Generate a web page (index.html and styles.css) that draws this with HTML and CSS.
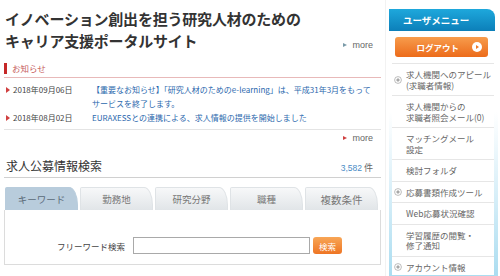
FILE: index.html
```html
<!DOCTYPE html>
<html lang="ja">
<head>
<meta charset="utf-8">
<title>研究人材のためのキャリア支援ポータルサイト</title>
<link rel="stylesheet" href="styles.css">
</head>
<body>
<div class="page">
  <div class="main">
    <div class="hero">
      <h1 class="site-title">イノベーション創出を担う研究人材のための<br>キャリア支援ポータルサイト</h1>
      <a class="more">more</a>
    </div>

    <section class="notice">
      <h2 class="notice-title"><span>お知らせ</span></h2>
      <ul class="news">
        <li><span class="date">2018年09月06日</span><a class="news-link">【重要なお知らせ】「研究人材のためのe-learning」は、平成31年3月をもって<br>サービスを終了します。</a></li>
        <li><span class="date">2018年08月02日</span><a class="news-link">EURAXESSとの連携による、求人情報の提供を開始しました</a></li>
      </ul>
      <div class="more-row"><a class="more more-red">more</a></div>
    </section>

    <section class="search">
      <div class="search-head">
        <h2 class="search-title">求人公募情報検索</h2>
        <span class="count"><span class="num">3,582</span> 件</span>
      </div>
      <div class="tabs">
        <span class="tab active">キーワード</span>
        <span class="tab">勤務地</span>
        <span class="tab">研究分野</span>
        <span class="tab">職種</span>
        <span class="tab tab-wide">複数条件</span>
      </div>
      <div class="panel">
        <label class="fw-label">フリーワード検索</label>
        <input class="fw-input" type="text">
        <button class="fw-btn">検索</button>
      </div>
    </section>
  </div>

  <aside class="side">
    <div class="side-box">
      <div class="side-head">ユーザメニュー</div>
      <a class="logout">ログアウト<span class="logout-ico"><svg width="10" height="10" viewBox="0 0 10 10"><circle cx="5" cy="5" r="5" fill="#fff"/><path d="M4 3 L7 5 L4 7 Z" fill="#f07a28"/></svg></span></a>
      <ul class="menu">
        <li class="has-icon"><span class="plus"><svg width="8" height="8" viewBox="0 0 8 8"><circle cx="4" cy="4" r="3.4" fill="#fff" stroke="#a0a0a0" stroke-width="0.7"/><path d="M2.2 4H5.8M4 2.2V5.8" stroke="#777" stroke-width="0.8"/></svg></span><span>求人機関へのアピール<br>(求職者情報)</span></li>
        <li><span>求人機関からの<br>求職者照会メール(0)</span></li>
        <li><span>マッチングメール<br>設定</span></li>
        <li><span>検討フォルダ</span></li>
        <li class="has-icon"><span class="plus"><svg width="8" height="8" viewBox="0 0 8 8"><circle cx="4" cy="4" r="3.4" fill="#fff" stroke="#a0a0a0" stroke-width="0.7"/><path d="M2.2 4H5.8M4 2.2V5.8" stroke="#777" stroke-width="0.8"/></svg></span><span>応募書類作成ツール</span></li>
        <li><span>Web応募状況確認</span></li>
        <li><span>学習履歴の閲覧・<br>修了通知</span></li>
        <li class="has-icon last"><span class="plus"><svg width="8" height="8" viewBox="0 0 8 8"><circle cx="4" cy="4" r="3.4" fill="#fff" stroke="#a0a0a0" stroke-width="0.7"/><path d="M2.2 4H5.8M4 2.2V5.8" stroke="#777" stroke-width="0.8"/></svg></span><span>アカウント情報</span></li>
      </ul>
    </div>
  </aside>
</div>
</body>
</html>
```

FILE: styles.css
```css
* { box-sizing: border-box; }
body {
  margin: 0;
  background: #fff;
  color: #555;
  font-family: "Noto Sans CJK JP", "Noto Sans", sans-serif;
}
ul { margin: 0; padding: 0; list-style: none; }
h1, h2 { margin: 0; }

.page {
  display: flex;
  width: 500px;
  height: 276px;
  overflow: hidden;
}

/* ---------- main column ---------- */
.main {
  width: 385px;
  flex: none;
  padding: 0 4px;
}

.hero {
  display: flex;
  justify-content: space-between;
  align-items: flex-end;
  padding: 8px 8px 0 1px;
}
.site-title {
  font-size: 15px;
  line-height: 22px;
  font-weight: 700;
  color: #333;
  letter-spacing: -0.2px;
}

.more {
  display: inline-flex;
  align-items: center;
  font-family: "Liberation Sans", sans-serif;
  font-size: 9px;
  line-height: 14px;
  color: #666;
}
.more::before {
  content: "";
  width: 0;
  height: 0;
  border-left: 4px solid #7a9aa8;
  border-top: 2.5px solid transparent;
  border-bottom: 2.5px solid transparent;
  margin-right: 5px;
}
.more-red::before { border-left-color: #d04040; }

.notice { margin-top: 10px; }
.notice-title {
  font-size: 8.5px;
  font-weight: 400;
  color: #c65a5a;
  border-bottom: 1px solid #e8b9b9;
  padding-bottom: 3px;
}
.notice-title span {
  display: inline-block;
  border-left: 3px solid #c62828;
  padding-left: 5px;
  line-height: 11px;
}

.news {
  margin-top: 5px;
  padding-bottom: 4px;
  border-bottom: 1px solid #e4e4e4;
}
.news li {
  display: flex;
  font-size: 8px;
  line-height: 14px;
  padding-left: 2px;
}
.news li::before {
  content: "";
  flex: none;
  width: 0;
  height: 0;
  margin-top: 4px;
  border-left: 4px solid #d04040;
  border-top: 3px solid transparent;
  border-bottom: 3px solid transparent;
  margin-right: 3px;
}
.date {
  width: 79px;
  flex: none;
  color: #444;
}
.news-link { color: #2b68ad; }

.more-row {
  display: flex;
  justify-content: flex-end;
  padding: 1px 8px 0 0;
  line-height: 12px;
}

.search { margin-top: 12px; }
.search-head {
  display: flex;
  justify-content: space-between;
  align-items: flex-end;
  border-bottom: 1px solid #d0d0d0;
  padding: 0 8px 3px 2px;
}
.search-title {
  font-size: 12px;
  line-height: 17px;
  font-weight: 400;
  color: #333;
}
.count {
  font-size: 9px;
  line-height: 12px;
  color: #666;
}
.count .num {
  font-family: "Liberation Sans", sans-serif;
  font-size: 8.5px;
  color: #4a8cc6;
}

.tabs {
  display: flex;
  gap: 2px;
  margin-top: 9px;
  padding-left: 1px;
}
.tab {
  width: 73px;
  height: 23px;
  display: flex;
  align-items: center;
  justify-content: center;
  font-size: 9.5px;
  color: #777;
  background: linear-gradient(#f7f8f9, #e1e5e8);
  border: 1px solid #dfe3e6;
  border-bottom: none;
  border-radius: 2px 9px 0 0 / 2px 18px 0 0;
}
.tab.active {
  background: #b8ccdc;
  border-color: #b8ccdc;
  color: #5a6a78;
}
.tab-wide { font-size: 10.5px; }

.panel {
  display: flex;
  align-items: center;
  height: 55px;
  border: 1px solid #dcdcdc;
  border-top: none;
  padding: 17px 0 0 52px;
}
.fw-label {
  font-size: 8.5px;
  color: #444;
  margin-right: 8px;
}
.fw-input {
  width: 177px;
  height: 17px;
  border: 1px solid #a9a9a9;
  margin: 0 3px 0 0;
  padding: 0;
}
.fw-btn {
  width: 29px;
  height: 17px;
  border: none;
  border-radius: 3px;
  background: linear-gradient(#f8a656, #ee7524);
  color: #fff;
  font-family: "Noto Sans CJK JP", sans-serif;
  font-size: 8.5px;
  padding: 0;
}

/* ---------- sidebar ---------- */
.side {
  width: 115px;
  flex: none;
  border-left: 1px solid #f2f2f2;
  padding: 9px 2px 0 3px;
}
.side-box {
  background: linear-gradient(#ffffff 0%, #ffffff 38%, #d6eef8 70%, #a9dcf0 100%);
  padding-bottom: 4px;
}
.side-head {
  height: 22px;
  margin-right: 3px;
  padding-left: 14px;
  border-radius: 0 8px 0 0;
  background: linear-gradient(#1ea8dc, #0c7fb9);
  color: #fff;
  font-size: 9.5px;
  font-weight: 700;
  line-height: 22px;
}
.logout {
  display: flex;
  align-items: center;
  justify-content: flex-end;
  height: 20px;
  margin: 6px 10px 0 6px;
  padding-right: 6px;
  border-radius: 3px;
  background: linear-gradient(#f79c4c, #ec6b1a);
  color: #fff;
  font-size: 8.5px;
  font-weight: 700;
}
.logout-ico {
  display: flex;
  margin-left: 13px;
}

.menu {
  margin: 6px 4px 0 3px;
  background: #fff;
  border-top: 1px solid #e6e6e6;
}
.menu li {
  display: flex;
  align-items: center;
  padding: 5px 2px 5px 14px;
  border-bottom: 1px solid #e6e6e6;
  font-size: 8.5px;
  line-height: 10.5px;
  color: #666;
}
.menu li.has-icon { padding-left: 2px; }
.menu li.last { border-bottom: none; padding-bottom: 3px; }
.plus {
  display: flex;
  flex: none;
  margin-right: 4px;
}
```
